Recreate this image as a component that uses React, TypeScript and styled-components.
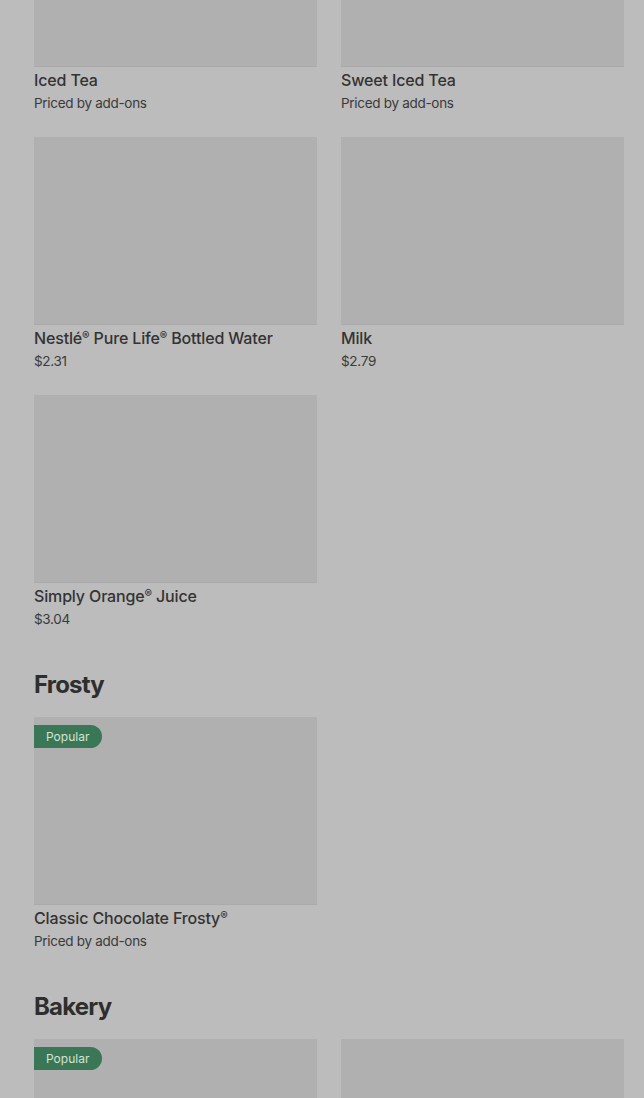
import React from "react";
import styled, { createGlobalStyle } from "styled-components";

const Global = createGlobalStyle`
  html, body { margin: 0; padding: 0; background: #bcbcbc; overflow: hidden; }
  body { font-family: Inter, "Noto Sans", Roboto, sans-serif; color: #2f2f2f; }
`;

const Page = styled.div`
  margin-top: -121px;
  padding: 0 20px 0 34px;
  display: flex;
  flex-direction: column;
`;

const Section = styled.section`
  display: flex;
  flex-direction: column;
  & + & { margin-top: 40px; }
`;

const Heading = styled.h2`
  margin: 0 0 16px;
  font-size: 24px;
  line-height: 32px;
  font-weight: 700;
  letter-spacing: -0.8px;
  color: #2e2e2e;
`;

const Grid = styled.div`
  display: grid;
  grid-template-columns: 283px 283px;
  column-gap: 24px;
  row-gap: 24px;
`;

const Card = styled.div`
  display: flex;
  flex-direction: column;
`;

const Thumb = styled.div`
  position: relative;
  height: 188px;
  background: #b0b0b0;
  box-shadow: inset 0 -1px 0 #aaaaaa;
`;

const Badge = styled.span`
  position: absolute;
  top: 8px;
  left: 0;
  height: 23px;
  padding: 0 13px 0 12px;
  display: flex;
  align-items: center;
  background: #3a7757;
  color: #d2e4d8;
  font-size: 12px;
  border-radius: 0 12px 12px 0;
`;

const Title = styled.div`
  margin-top: 3px;
  font-size: 16px;
  line-height: 20px;
  font-weight: 500;
  letter-spacing: -0.15px;
  color: #333;
`;

const Reg = styled.span`
  font-size: 0.7em;
  vertical-align: 0.35em;
  line-height: 0;
`;

const Price = styled.div`
  margin-top: 3px;
  font-size: 13.5px;
  line-height: 20px;
  font-weight: 400;
  color: #3a3a3a;
  letter-spacing: -0.3px;
`;

type Item = { name: string; price?: string; popular?: boolean; noText?: boolean };

const sections: { title?: string; items: Item[] }[] = [
  {
    items: [
      { name: "Iced Tea" },
      { name: "Sweet Iced Tea" },
      { name: "Nestlé® Pure Life® Bottled Water", price: "$2.31" },
      { name: "Milk", price: "$2.79" },
      { name: "Simply Orange® Juice", price: "$3.04" },
    ],
  },
  {
    title: "Frosty",
    items: [{ name: "Classic Chocolate Frosty®", popular: true }],
  },
  {
    title: "Bakery",
    items: [
      { name: "", popular: true, noText: true },
      { name: "", noText: true },
    ],
  },
];

function renderName(name: string) {
  const parts = name.split("®");
  return parts.map((p, i) => (
    <React.Fragment key={i}>
      {p}
      {i < parts.length - 1 && <Reg>®</Reg>}
    </React.Fragment>
  ));
}

export default function App() {
  return (
    <>
      <Global />
      <Page>
        {sections.map((s, i) => (
          <Section key={i}>
            {s.title && <Heading>{s.title}</Heading>}
            <Grid>
              {s.items.map((it, j) => (
                <Card key={j}>
                  <Thumb>{it.popular && <Badge>Popular</Badge>}</Thumb>
                  {!it.noText && (
                    <>
                      <Title>{renderName(it.name)}</Title>
                      <Price>{it.price ?? "Priced by add-ons"}</Price>
                    </>
                  )}
                </Card>
              ))}
            </Grid>
          </Section>
        ))}
      </Page>
    </>
  );
}
